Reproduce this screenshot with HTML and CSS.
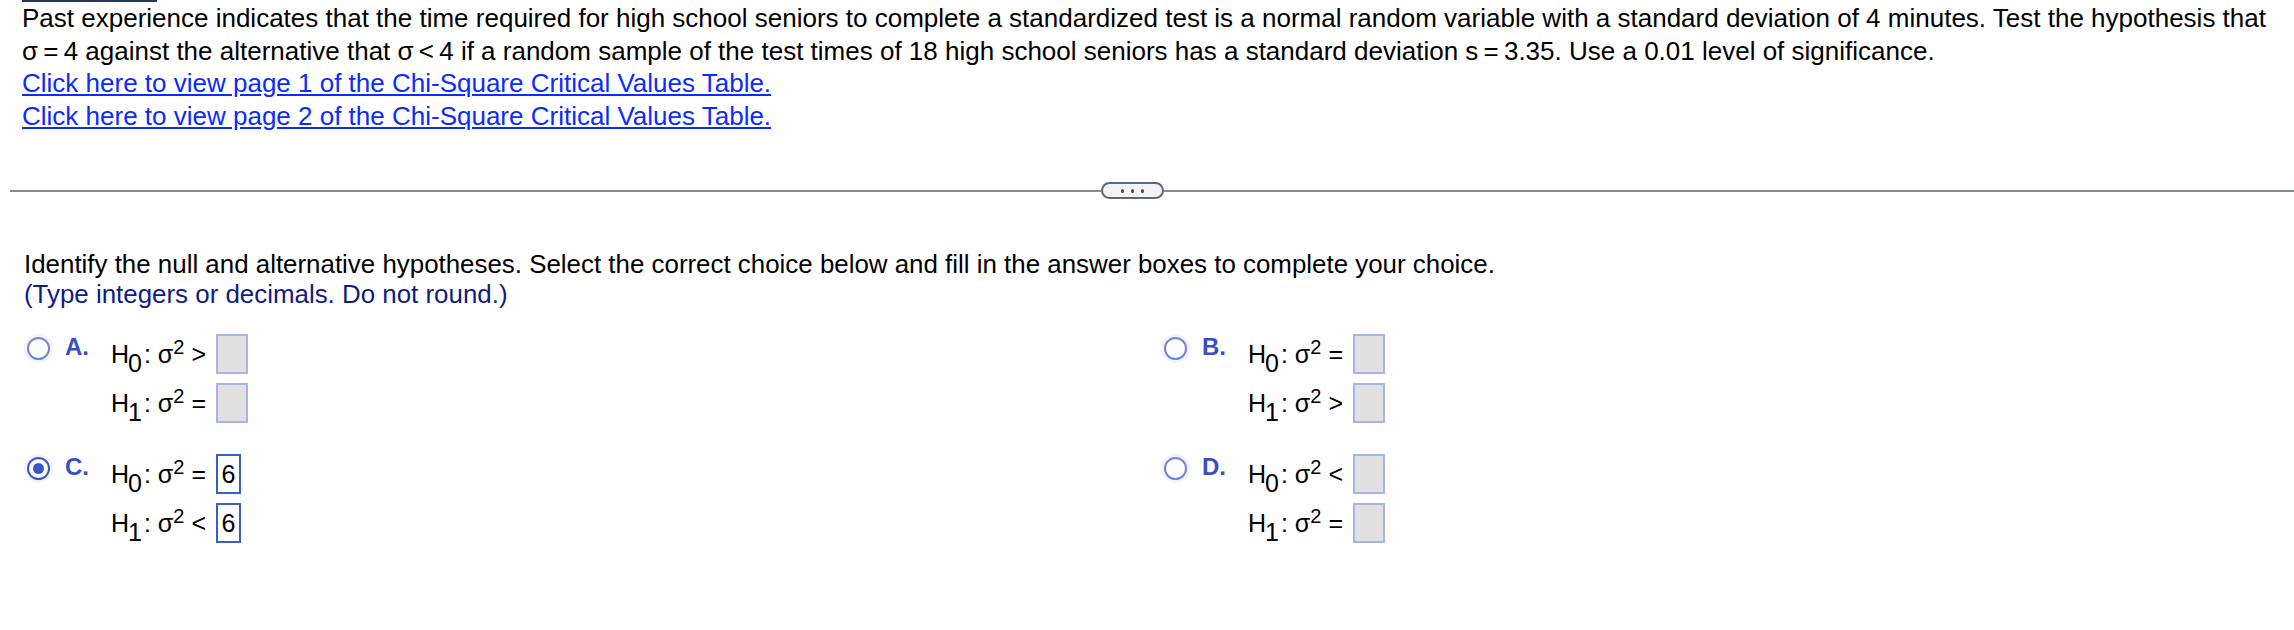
FILE: index.html
```html
<!DOCTYPE html>
<html>
<head>
<meta charset="utf-8">
<link rel="stylesheet" href="styles.css">
</head>
<body>
<div class="topbar"></div>
<div class="intro">
  <div>Past experience indicates that the time required for high school seniors to complete a standardized test is a normal random variable with a standard deviation of 4 minutes. Test the hypothesis that <span class="nw">σ&#8201;=&#8201;4</span> against the alternative that <span class="nw">σ&#8201;&lt;&#8201;4</span> if a random sample of the test times of 18 high school seniors has a standard deviation <span class="nw">s&#8201;=&#8201;3.35</span>. Use a 0.01 level of significance.</div>
  <div><a class="link" href="#">Click here to view page 1 of the Chi-Square Critical Values Table.</a></div>
  <div><a class="link" href="#">Click here to view page 2 of the Chi-Square Critical Values Table.</a></div>
</div>

<div class="divider">
  <div class="rule rule-left"></div>
  <div class="pill"><span class="dot"></span><span class="dot"></span><span class="dot"></span></div>
  <div class="rule rule-right"></div>
</div>

<div class="question">
  <div>Identify the null and alternative hypotheses. Select the correct choice below and fill in the answer boxes to complete your choice.</div>
  <div class="hint">(Type integers or decimals. Do not round.)</div>
</div>

<div class="options">
  <div class="option">
    <span class="radio"></span>
    <span class="letter">A.</span>
    <div class="math">
      <div class="mrow"><span class="h">H<span class="sub">0</span></span><span class="colon">:</span> σ<span class="sup">2</span> &gt;<span class="box"></span></div>
      <div class="mrow"><span class="h">H<span class="sub">1</span></span><span class="colon">:</span> σ<span class="sup">2</span> =<span class="box"></span></div>
    </div>
  </div>
  <div class="option">
    <span class="radio"></span>
    <span class="letter">B.</span>
    <div class="math">
      <div class="mrow"><span class="h">H<span class="sub">0</span></span><span class="colon">:</span> σ<span class="sup">2</span> =<span class="box"></span></div>
      <div class="mrow"><span class="h">H<span class="sub">1</span></span><span class="colon">:</span> σ<span class="sup">2</span> &gt;<span class="box"></span></div>
    </div>
  </div>
  <div class="option">
    <span class="radio selected"></span>
    <span class="letter">C.</span>
    <div class="math">
      <div class="mrow"><span class="h">H<span class="sub">0</span></span><span class="colon">:</span> σ<span class="sup">2</span> =<span class="box filled">6</span></div>
      <div class="mrow"><span class="h">H<span class="sub">1</span></span><span class="colon">:</span> σ<span class="sup">2</span> &lt;<span class="box filled">6</span></div>
    </div>
  </div>
  <div class="option">
    <span class="radio"></span>
    <span class="letter">D.</span>
    <div class="math">
      <div class="mrow"><span class="h">H<span class="sub">0</span></span><span class="colon">:</span> σ<span class="sup">2</span> &lt;<span class="box"></span></div>
      <div class="mrow"><span class="h">H<span class="sub">1</span></span><span class="colon">:</span> σ<span class="sup">2</span> =<span class="box"></span></div>
    </div>
  </div>
</div>
</body>
</html>
```

FILE: styles.css
```css
html, body {
  margin: 0;
  padding: 0;
  background: #ffffff;
}
body {
  font-family: "Liberation Sans", Arial, sans-serif;
  color: #000;
  width: 2294px;
  overflow: hidden;
}
.topbar {
  margin-left: 22px;
  width: 135px;
  height: 2px;
  background: #21385a;
}
.intro {
  padding-left: 22px;
  padding-right: 0;
  font-size: 26px;
  line-height: 32.7px;
}
.nw {
  white-space: nowrap;
}
.link {
  color: #0b2bff;
  text-decoration: underline;
}
.divider {
  margin-top: 49.5px;
  height: 17px;
  display: flex;
  align-items: center;
}
.rule {
  height: 2px;
  background: #858d99;
}
.rule-left {
  margin-left: 10px;
  width: 1091px;
}
.rule-right {
  flex: 1;
}
.pill {
  box-sizing: border-box;
  width: 63px;
  height: 17px;
  border: 2px solid #5e6775;
  border-radius: 9px;
  background: #f2f3f5;
  display: flex;
  align-items: center;
  justify-content: center;
  gap: 6.5px;
}
.dot {
  width: 3.5px;
  height: 3.5px;
  border-radius: 50%;
  background: #4d535b;
}
.question {
  margin-top: 50px;
  padding-left: 24px;
  font-size: 25.9px;
  line-height: 30px;
}
.hint {
  color: #101c84;
}
.options {
  margin-top: 24.7px;
  padding-left: 27px;
  display: grid;
  grid-template-columns: 1137px 1fr;
  row-gap: 31px;
}
.option {
  display: flex;
  align-items: flex-start;
}
.radio {
  box-sizing: border-box;
  flex: none;
  width: 23px;
  height: 23px;
  margin-top: 3px;
  border-radius: 50%;
  border: 2px solid #7186d6;
  box-shadow: 0 0 0 3px #f3f4f8;
  background: #fff;
  position: relative;
}
.radio.selected {
  border-color: #3d57c9;
}
.radio.selected::after {
  content: "";
  position: absolute;
  left: 4px;
  top: 4px;
  width: 11px;
  height: 11px;
  border-radius: 50%;
  background: #3d57c9;
}
.letter {
  flex: none;
  margin-left: 15px;
  margin-top: 1px;
  width: 46px;
  font-weight: bold;
  font-size: 24px;
  line-height: 24px;
  color: #3a4fc2;
}
.math {
  display: flex;
  flex-direction: column;
  gap: 9px;
  font-size: 25px;
}
.mrow {
  height: 40px;
  line-height: 40px;
  white-space: nowrap;
}
.sub {
  position: relative;
  top: 9px;
  margin-left: -1px;
}
.colon {
  margin-left: 2px;
}
.sup {
  font-size: 20px;
  position: relative;
  top: -9px;
  vertical-align: baseline;
}
.box {
  box-sizing: border-box;
  display: inline-block;
  vertical-align: top;
  margin-left: 10px;
  width: 32px;
  height: 40px;
  border: 2px solid #a3b6e6;
  background: #e0e0e0;
  line-height: 36px;
  text-align: center;
}
.box.filled {
  width: 25px;
  background: #fff;
  border-color: #3a5ec8;
}
```
